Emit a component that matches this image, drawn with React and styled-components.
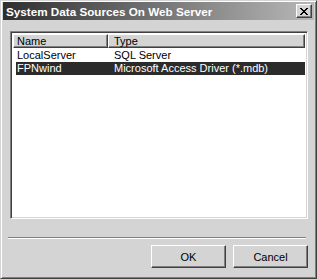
import React from 'react'
import styled, { createGlobalStyle } from 'styled-components'

const GlobalStyle = createGlobalStyle`
  html, body {
    margin: 0;
    padding: 0;
    background: #d4d4d4;
  }
  * {
    box-sizing: border-box;
  }
`

const Window = styled.div`
  width: 317px;
  height: 279px;
  display: flex;
  flex-direction: column;
  background: #d4d4d4;
  border: 1px solid;
  border-color: #d4d4d4 #404040 #404040 #d4d4d4;
  box-shadow: inset 1px 1px 0 #ffffff, inset -1px -1px 0 #808080;
  padding: 1px 2px 2px 2px;
  font-family: Tahoma, 'Liberation Sans', Arial, sans-serif;
  font-size: 11px;
  color: #000;
`

const TitleBar = styled.div`
  height: 18px;
  display: flex;
  align-items: center;
  justify-content: space-between;
  padding: 0 2px 0 3px;
  background: linear-gradient(to right, #2e2e2e 0%, #6e6e6e 45%, #b8b8b8 100%);
`

const Title = styled.span`
  color: #ffffff;
  font-weight: bold;
  font-size: 11.7px;
  white-space: nowrap;
`

const CloseButton = styled.button`
  width: 16px;
  height: 14px;
  padding: 0;
  display: flex;
  align-items: center;
  justify-content: center;
  background: #d4d4d4;
  border: 1px solid;
  border-color: #ffffff #404040 #404040 #ffffff;
  box-shadow: inset -1px -1px 0 #808080;
`

const Content = styled.div`
  flex: 1;
  display: flex;
  flex-direction: column;
  padding: 11px 6px 7px 7px;
`

const ListBox = styled.div`
  height: 188px;
  background: #ffffff;
  border: 1px solid;
  border-color: #808080 #ffffff #ffffff #808080;
  box-shadow: inset 1px 1px 0 #404040, inset -1px -1px 0 #d4d4d4;
  padding: 2px;
  display: flex;
  flex-direction: column;
`

const HeaderRow = styled.div`
  display: flex;
  height: 14px;
`

const HeaderCell = styled.div`
  width: ${p => (p.$width ? `${p.$width}px` : 'auto')};
  flex: ${p => (p.$width ? 'none' : '1')};
  display: flex;
  align-items: center;
  background: #d4d4d4;
  border: 1px solid;
  border-color: #ffffff #404040 #404040 #ffffff;
  box-shadow: inset -1px -1px 0 #808080;
  padding: 0 0 0 ${p => p.$pad}px;
  white-space: nowrap;
`

const Row = styled.div`
  display: flex;
  height: 13.5px;
  margin-left: 3px;
  align-items: center;
  background: ${p => (p.$selected ? '#2b2b2b' : 'transparent')};
  color: ${p => (p.$selected ? '#ffffff' : '#000000')};
`

const Cell = styled.div`
  width: ${p => (p.$width ? `${p.$width}px` : 'auto')};
  flex: ${p => (p.$width ? 'none' : '1')};
  padding-left: ${p => p.$pad}px;
  white-space: nowrap;
`

const Separator = styled.div`
  height: 2px;
  margin: 18px 2px 0 -2px;
  border-top: 1px solid #808080;
  border-bottom: 1px solid #ffffff;
`

const ButtonRow = styled.div`
  display: flex;
  justify-content: flex-end;
  gap: 7px;
  margin-top: 6px;
`

const Button = styled.button`
  width: 75px;
  height: 23px;
  padding: 0;
  background: #d4d4d4;
  font-family: inherit;
  font-size: 11px;
  color: #000;
  border: 1px solid;
  border-color: #ffffff #404040 #404040 #ffffff;
  box-shadow: inset -1px -1px 0 #808080;
`

const CloseIcon = () => (
  <svg width="8" height="7" viewBox="0 0 8 7" shapeRendering="crispEdges">
    <path
      fill="#000"
      d="M0 0h2v1h-2z M6 0h2v1h-2z M1 1h2v1h-2z M5 1h2v1h-2z M2 2h4v1h-4z M3 3h2v1h-2z M2 4h4v1h-4z M1 5h2v1h-2z M5 5h2v1h-2z M0 6h2v1h-2z M6 6h2v1h-2z"
    />
  </svg>
)

const sources = [
  { name: 'LocalServer', type: 'SQL Server' },
  { name: 'FPNwind', type: 'Microsoft Access Driver (*.mdb)', selected: true },
]

const App = () => {
  return (
    <Window>
      <GlobalStyle />
      <TitleBar>
        <Title>System Data Sources On Web Server</Title>
        <CloseButton aria-label="Close">
          <CloseIcon />
        </CloseButton>
      </TitleBar>
      <Content>
        <ListBox>
          <HeaderRow>
            <HeaderCell $width={95} $pad={3}>Name</HeaderCell>
            <HeaderCell $pad={5}>Type</HeaderCell>
          </HeaderRow>
          {sources.map((s, index) => (
            <Row key={index} $selected={s.selected}>
              <Cell $width={92} $pad={1}>{s.name}</Cell>
              <Cell $pad={6}>{s.type}</Cell>
            </Row>
          ))}
        </ListBox>
        <Separator />
        <ButtonRow>
          <Button>OK</Button>
          <Button>Cancel</Button>
        </ButtonRow>
      </Content>
    </Window>
  )
}

export default App
